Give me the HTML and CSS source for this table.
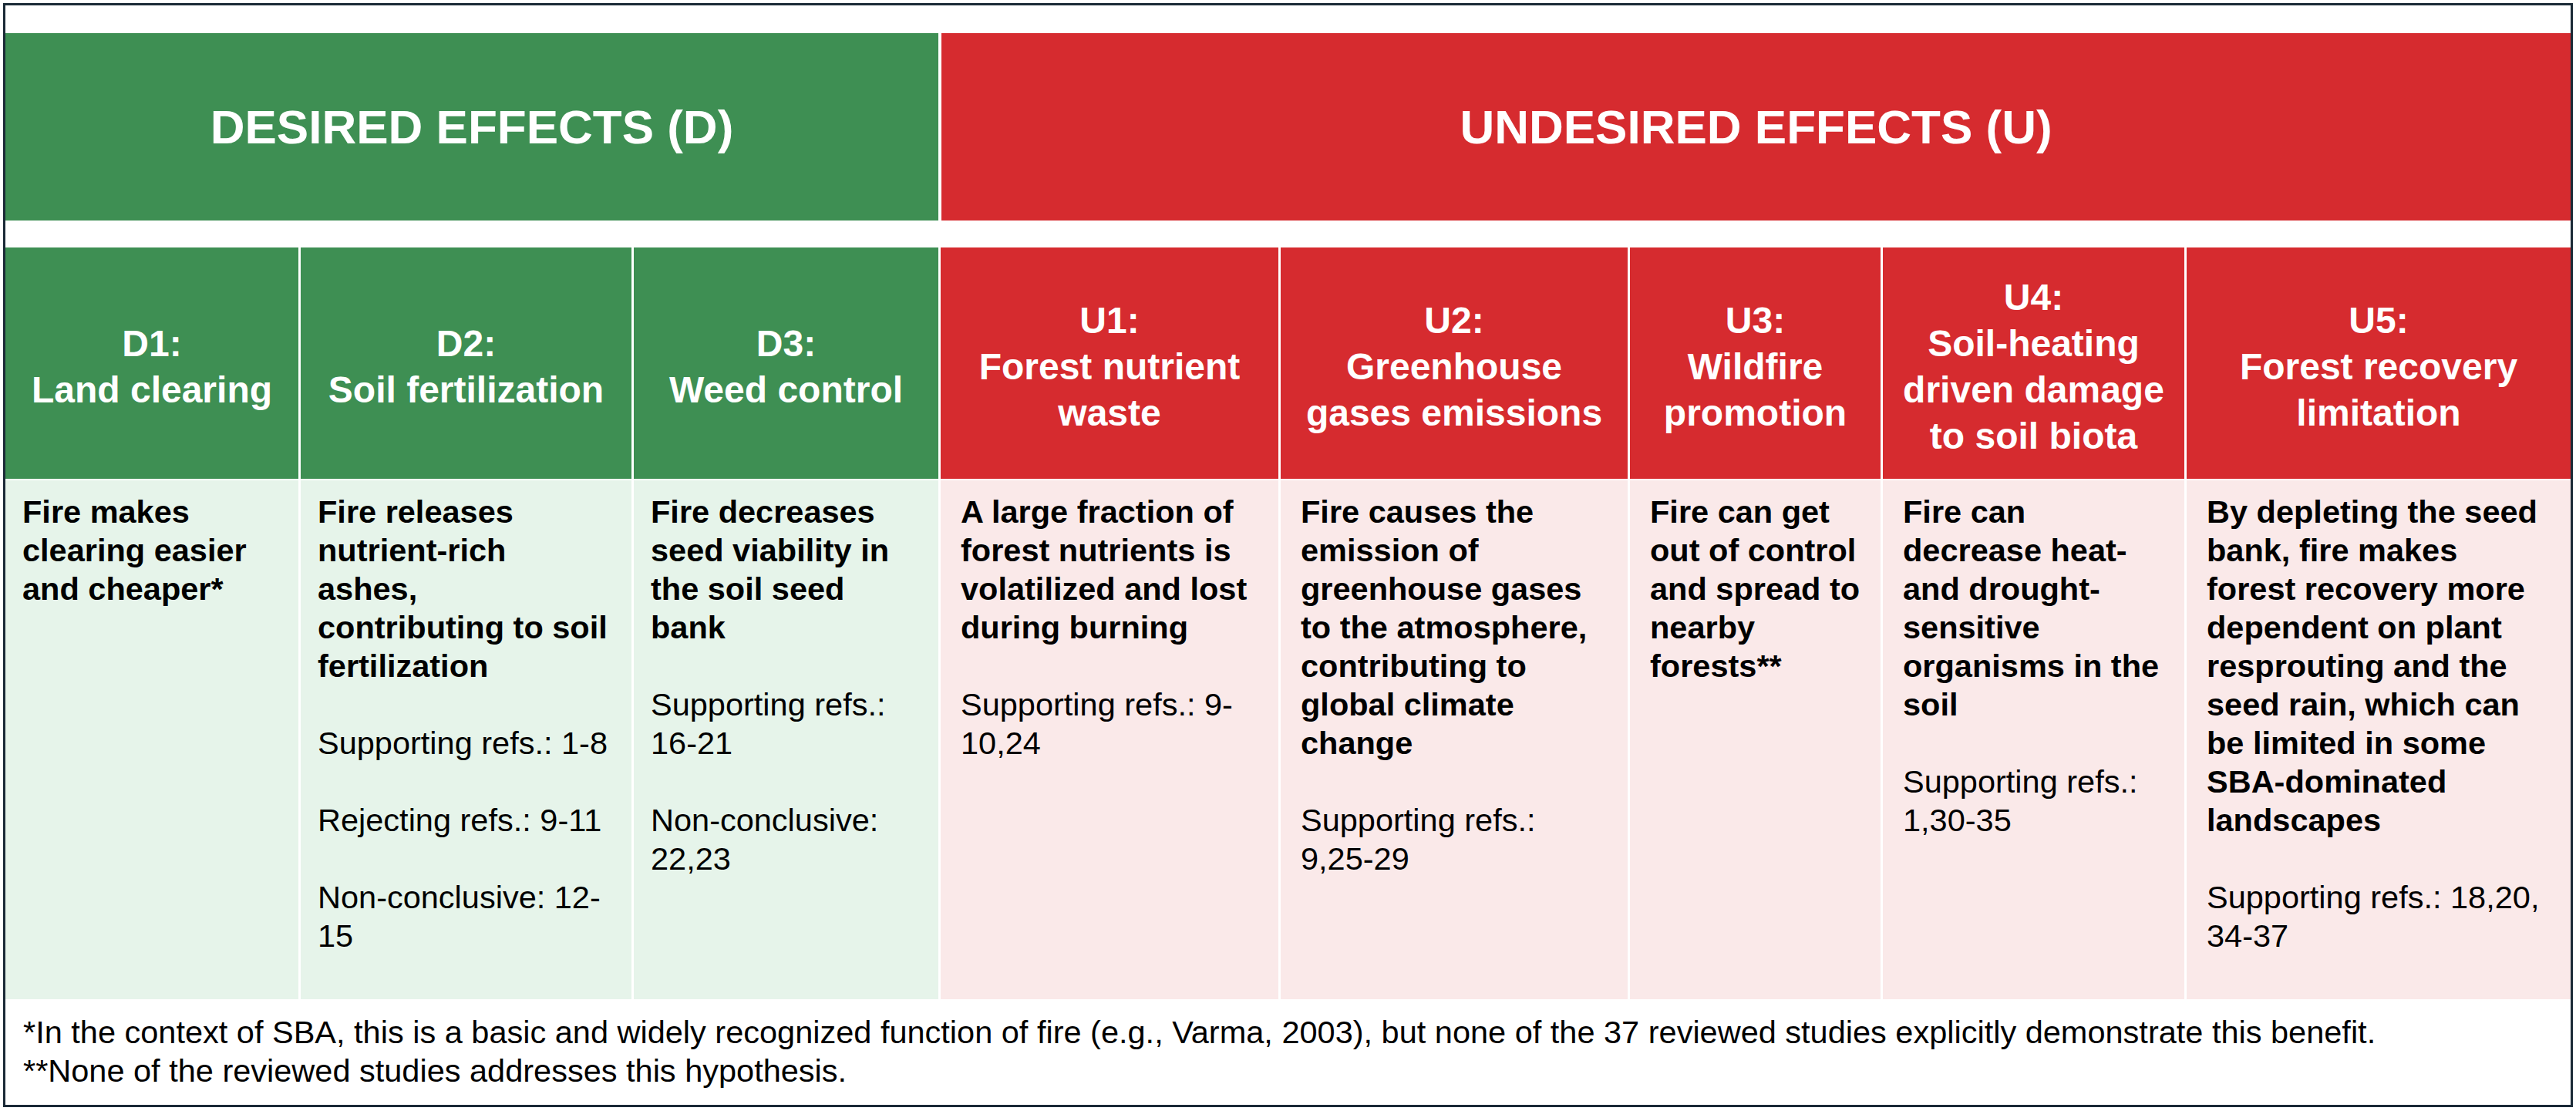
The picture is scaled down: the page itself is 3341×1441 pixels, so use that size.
FILE: index.html
```html
<!DOCTYPE html>
<html lang="en">
<head>
<meta charset="utf-8">
<title>Desired and undesired effects of fire</title>
<link rel="stylesheet" href="styles.css">
</head>
<body>
<div class="sheet">
  <div class="grid">
    <div class="group group-d">DESIRED EFFECTS (D)</div>
    <div class="group group-u">UNDESIRED EFFECTS (U)</div>

    <div class="head head-d"><span class="code">D1:</span><span>Land clearing</span></div>
    <div class="head head-d"><span class="code">D2:</span><span>Soil fertilization</span></div>
    <div class="head head-d"><span class="code">D3:</span><span>Weed control</span></div>
    <div class="head head-u"><span class="code">U1:</span><span>Forest nutrient waste</span></div>
    <div class="head head-u"><span class="code">U2:</span><span>Greenhouse gases emissions</span></div>
    <div class="head head-u"><span class="code">U3:</span><span>Wildfire promotion</span></div>
    <div class="head head-u"><span class="code">U4:</span><span>Soil-heating driven damage to soil biota</span></div>
    <div class="head head-u"><span class="code">U5:</span><span>Forest recovery limitation</span></div>

    <div class="cell cell-d">
      <p class="claim">Fire makes clearing easier and cheaper*</p>
    </div>
    <div class="cell cell-d">
      <p class="claim">Fire releases nutrient-rich ashes, contributing to soil fertilization</p>
      <p>Supporting refs.: 1-8</p>
      <p>Rejecting refs.: 9-11</p>
      <p>Non-conclusive: 12-<wbr>15</p>
    </div>
    <div class="cell cell-d">
      <p class="claim">Fire decreases seed viability in the soil seed bank</p>
      <p>Supporting refs.: 16-21</p>
      <p>Non-conclusive: 22,23</p>
    </div>
    <div class="cell cell-u">
      <p class="claim">A large fraction of forest nutrients is volatilized and lost during burning</p>
      <p>Supporting refs.: 9-<wbr>10,24</p>
    </div>
    <div class="cell cell-u">
      <p class="claim">Fire causes the emission of greenhouse gases to the atmosphere, contributing to global climate change</p>
      <p>Supporting refs.: 9,25-29</p>
    </div>
    <div class="cell cell-u">
      <p class="claim">Fire can get out of control and spread to nearby forests**</p>
    </div>
    <div class="cell cell-u">
      <p class="claim">Fire can decrease heat- and drought-sensitive organisms in the soil</p>
      <p>Supporting refs.: 1,30-35</p>
    </div>
    <div class="cell cell-u">
      <p class="claim">By depleting the seed bank, fire makes forest recovery more dependent on plant resprouting and the seed rain, which can be limited in some SBA-dominated landscapes</p>
      <p>Supporting refs.: 18,20, 34-37</p>
    </div>
  </div>
  <div class="notes">
    <p>*In the context of SBA, this is a basic and widely recognized function of fire (e.g., Varma, 2003), but none of the 37 reviewed studies explicitly demonstrate this benefit.</p>
    <p>**None of the reviewed studies addresses this hypothesis.</p>
  </div>
</div>
</body>
</html>
```
FILE: styles.css
```css
html, body {
  background: #ffffff;
}
body {
  margin: 4px;
  font-family: "Liberation Sans", Arial, sans-serif;
  color: #000000;
}
.sheet {
  border: 3px solid #1b2a37;
  padding-top: 36px;
  background: #ffffff;
}
.grid {
  display: grid;
  grid-template-columns: 380px 429px 395px 438px 450px 325px 391px 1fr;
  column-gap: 3px;
  row-gap: 2px;
}
.group {
  height: 243px;
  margin-bottom: 33px;
  display: flex;
  align-items: center;
  justify-content: center;
  color: #ffffff;
  font-weight: 700;
  font-size: 62px;
  line-height: 1;
}
.group-d {
  grid-column: 1 / span 3;
  background: #3e8f53;
}
.group-u {
  grid-column: 4 / span 5;
  background: #d62b2f;
  margin-left: 1px;
}
.head {
  height: 300px;
  box-sizing: border-box;
  padding: 10px 20px 0;
  display: flex;
  flex-direction: column;
  align-items: center;
  justify-content: center;
  text-align: center;
  color: #ffffff;
  font-weight: 700;
  font-size: 48px;
  line-height: 60px;
}
.head-d {
  background: #3e8f53;
}
.head-u {
  background: #d62b2f;
}
.code {
  display: block;
}
.cell {
  height: 673px;
  box-sizing: border-box;
  padding: 16px 24px 0 26px;
  font-size: 41.5px;
  line-height: 50px;
}
.cell-d {
  background: #e6f4ea;
  padding-left: 22px;
  padding-right: 26px;
}
.cell-u {
  background: #fae9e9;
}
.cell p {
  margin: 0 0 50px;
}
.cell p:last-child {
  margin-bottom: 0;
}
.cell p.claim {
  font-weight: 700;
}
.notes {
  padding: 18px 23px 19px;
  font-size: 41.5px;
  line-height: 50px;
}
.notes p {
  margin: 0;
}
```
